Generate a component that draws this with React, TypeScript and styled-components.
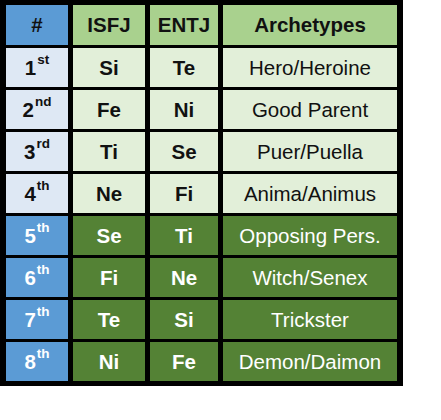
import styled, { createGlobalStyle } from "styled-components";

const GlobalStyle = createGlobalStyle`
    body {
        margin: 0;
        background: #ffffff;
        font-family: "Liberation Sans", Arial, sans-serif;
    }
`

type Tone = "blueHead" | "blueLight" | "greenHead" | "greenLight" | "greenDark" | "blueDark";

const toneColors: Record<Tone, { bg: string; fg: string }> = {
    blueHead: { bg: "#5b9bd5", fg: "#111111" },
    blueLight: { bg: "#dee8f4", fg: "#111111" },
    blueDark: { bg: "#5b9bd5", fg: "#ffffff" },
    greenHead: { bg: "#a9d18e", fg: "#111111" },
    greenLight: { bg: "#e2efd9", fg: "#111111" },
    greenDark: { bg: "#548235", fg: "#ffffff" },
};

const Table = styled.div`
    display: inline-grid;
    grid-template-columns: 62px 72px 68px 174px;
    grid-template-rows: 40px repeat(8, 39px);
    column-gap: 5px;
    row-gap: 3px;
    padding: 5px 6px 5px 6px;
    background: #000000;
`

const Row = styled.div`
    display: contents;
`

interface CellProp {
    tone: Tone;
    bold?: boolean;
}

const Cell = styled.div<CellProp>`
    display: flex;
    align-items: center;
    justify-content: center;
    background: ${(p) => toneColors[p.tone].bg};
    color: ${(p) => toneColors[p.tone].fg};
    font-size: 20.5px;
    font-weight: ${(p) => (p.bold ? 700 : 400)};
    white-space: nowrap;
`

const Sup = styled.span`
    font-size: 13.5px;
    position: relative;
    top: -8px;
    margin-left: 1px;
`

const rows = [
    { n: "1", s: "st", a: "Si", b: "Te", arch: "Hero/Heroine" },
    { n: "2", s: "nd", a: "Fe", b: "Ni", arch: "Good Parent" },
    { n: "3", s: "rd", a: "Ti", b: "Se", arch: "Puer/Puella" },
    { n: "4", s: "th", a: "Ne", b: "Fi", arch: "Anima/Animus" },
    { n: "5", s: "th", a: "Se", b: "Ti", arch: "Opposing Pers." },
    { n: "6", s: "th", a: "Fi", b: "Ne", arch: "Witch/Senex" },
    { n: "7", s: "th", a: "Te", b: "Si", arch: "Trickster" },
    { n: "8", s: "th", a: "Ni", b: "Fe", arch: "Demon/Daimon" },
];

export default function App() {
    return (
        <>
            <GlobalStyle />
            <Table>
                <Row>
                    <Cell tone="blueHead" bold>#</Cell>
                    <Cell tone="greenHead" bold>ISFJ</Cell>
                    <Cell tone="greenHead" bold>ENTJ</Cell>
                    <Cell tone="greenHead" bold>Archetypes</Cell>
                </Row>
                {rows.map((r, i) => {
                    const shadow = i >= 4;
                    return (
                        <Row key={r.n}>
                            <Cell tone={shadow ? "blueDark" : "blueLight"} bold>
                                {r.n}<Sup>{r.s}</Sup>
                            </Cell>
                            <Cell tone={shadow ? "greenDark" : "greenLight"} bold>{r.a}</Cell>
                            <Cell tone={shadow ? "greenDark" : "greenLight"} bold>{r.b}</Cell>
                            <Cell tone={shadow ? "greenDark" : "greenLight"}>{r.arch}</Cell>
                        </Row>
                    );
                })}
            </Table>
        </>
    );
}
